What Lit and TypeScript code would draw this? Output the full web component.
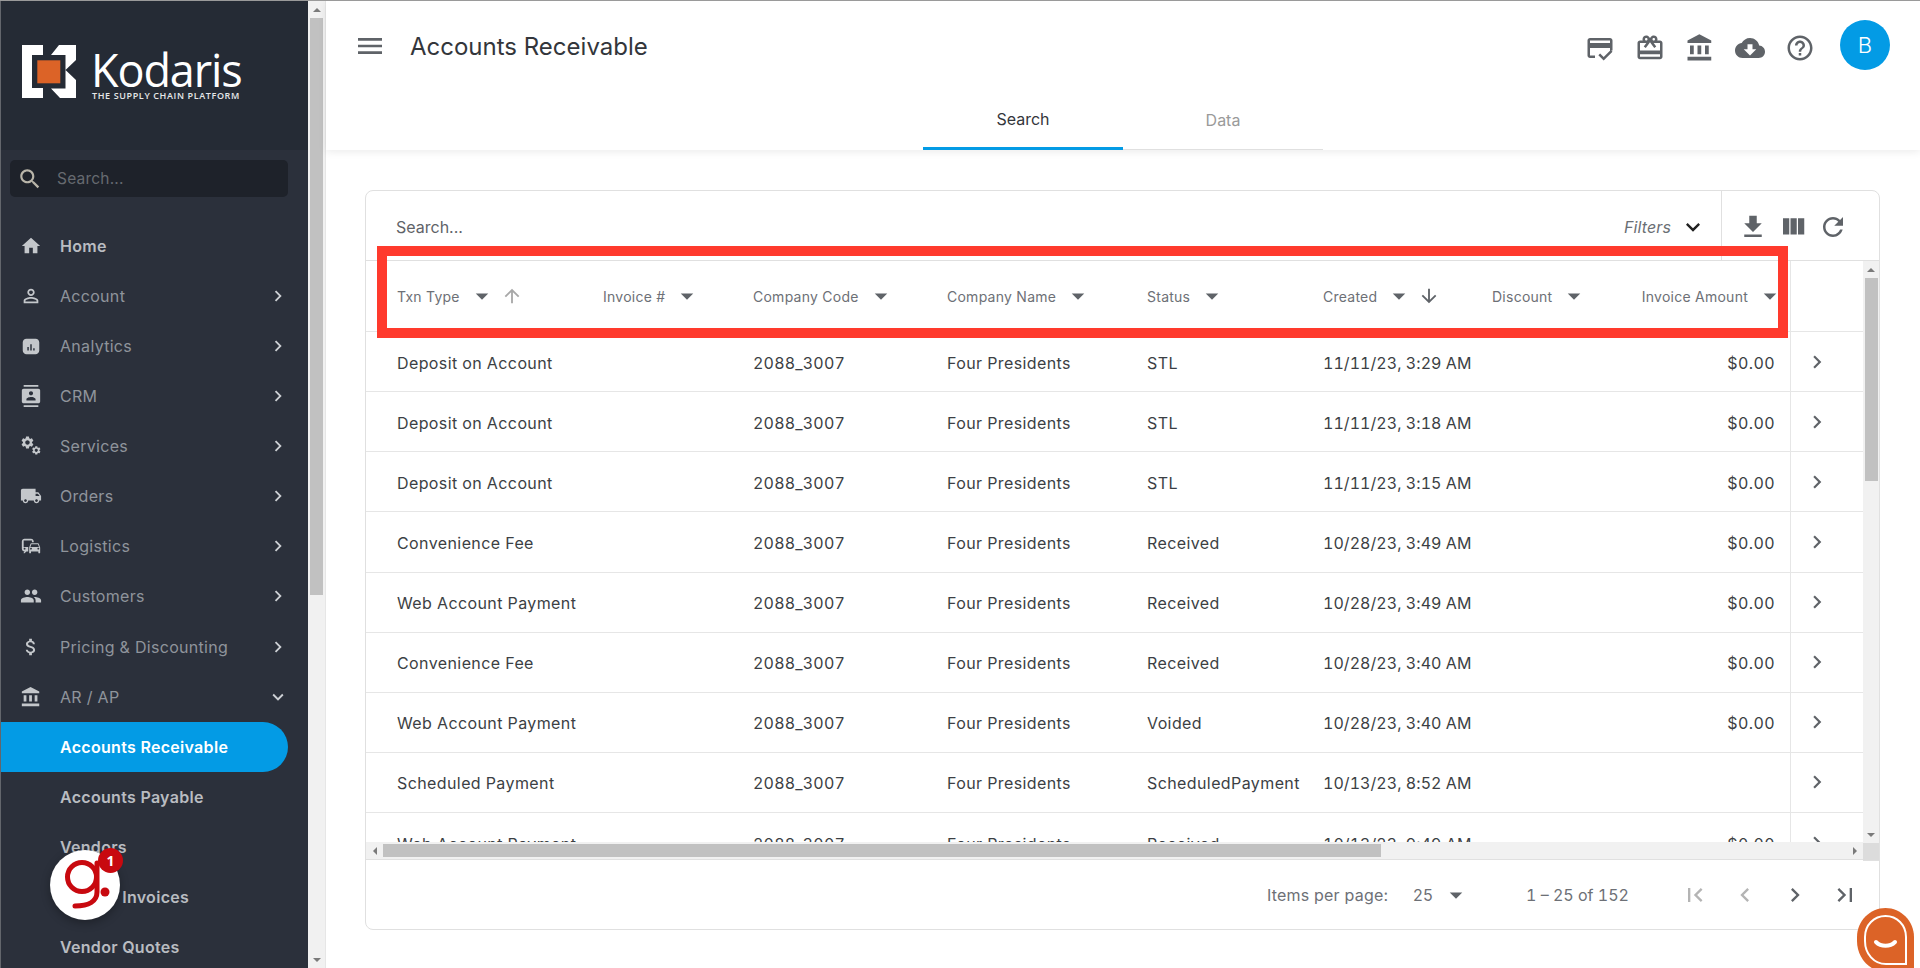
import { LitElement, html, css } from "lit";
import { customElement } from "lit/decorators.js";

const P: Record<string, string> = {
  home: "M10 20v-6h4v6h5v-8h3L12 3 2 12h3v8z",
  person: "M12 5.9c1.16 0 2.1.94 2.1 2.1s-.94 2.1-2.1 2.1S9.9 9.16 9.9 8s.94-2.1 2.1-2.1m0 9c2.97 0 6.1 1.46 6.1 2.1v1.1H5.9V17c0-.64 3.13-2.1 6.1-2.1M12 4C9.79 4 8 5.79 8 8s1.79 4 4 4 4-1.79 4-4-1.79-4-4-4zm0 9c-2.67 0-8 1.34-8 4v3h16v-3c0-2.66-5.33-4-8-4z",
  analytics: "M7 4h10c2.2 0 4 1.8 4 4v9c0 2.2-1.8 4-4 4H7c-2.2 0-4-1.8-4-4V8c0-2.2 1.8-4 4-4zM8 13v4h1.6v-4zM11.2 10v7h1.6v-7zM14.4 14.5V17H16v-2.5z",
  crm: "M20 0H4v2h16V0zM4 24h16v-2H4v2zM20 4H4c-1.1 0-2 .9-2 2v12c0 1.1.9 2 2 2h16c1.1 0 2-.9 2-2V6c0-1.1-.9-2-2-2zm-8 2.75c1.24 0 2.25 1.01 2.25 2.25s-1.01 2.25-2.25 2.25S9.75 10.24 9.75 9 10.76 6.75 12 6.75zM17 17H7v-1.5c0-1.67 3.33-2.5 5-2.5s5 .83 5 2.5V17z",
  truck: "M20 8h-3V4H3c-1.1 0-2 .9-2 2v11h2c0 1.66 1.34 3 3 3s3-1.34 3-3h6c0 1.66 1.34 3 3 3s3-1.34 3-3h2v-5l-3-4zM6 18.5c-.83 0-1.5-.67-1.5-1.5s.67-1.5 1.5-1.5 1.5.67 1.5 1.5-.67 1.5-1.5 1.5zm13.5-9l1.96 2.5H17V9.5h2.5zm-1.5 9c-.83 0-1.5-.67-1.5-1.5s.67-1.5 1.5-1.5 1.5.67 1.5 1.5-.67 1.5-1.5 1.5z",
  commute: "M12 4H5C3.34 4 2 5.34 2 7v8c0 1.66 1.34 3 3 3l-1 1v1h1l2-2h2v-5H4V6h9v2h2V7c0-1.66-1.34-3-3-3zM5 14c.55 0 1 .45 1 1s-.45 1-1 1-1-.45-1-1 .45-1 1-1zm15.57-4.34c-.14-.4-.52-.66-.97-.66h-7.19c-.46 0-.83.26-.98.66L10 13.77l.01 5.51c0 .38.31.72.69.72h.62c.38 0 .68-.38.68-.76V18h8v1.24c0 .38.31.76.69.76h.61c.38 0 .69-.34.69-.72l.01-1.37v-4.14l-1.43-4.07zm-8.16.34h7.19l1.03 3h-9.25l1.03-3zM12 16c-.55 0-1-.45-1-1s.45-1 1-1 1 .45 1 1-.45 1-1 1zm8 0c-.55 0-1-.45-1-1s.45-1 1-1 1 .45 1 1-.45 1-1 1z",
  people: "M16 11c1.66 0 2.99-1.34 2.99-3S17.66 5 16 5c-1.66 0-3 1.34-3 3s1.34 3 3 3zm-8 0c1.66 0 2.99-1.34 2.99-3S9.66 5 8 5C6.34 5 5 6.34 5 8s1.34 3 3 3zm0 2c-2.33 0-7 1.17-7 3.5V19h14v-2.5c0-2.33-4.67-3.5-7-3.5zm8 0c-.29 0-.62.02-.97.05 1.16.84 1.97 1.97 1.97 3.45V19h6v-2.5c0-2.33-4.67-3.5-7-3.5z",
  money: "M11.8 10.9c-2.27-.59-3-1.2-3-2.15 0-1.09 1.01-1.85 2.7-1.85 1.78 0 2.44.85 2.5 2.1h2.21c-.07-1.72-1.12-3.3-3.21-3.81V3h-3v2.16c-1.94.42-3.5 1.68-3.5 3.61 0 2.31 1.91 3.46 4.7 4.13 2.5.6 3 1.48 3 2.41 0 .69-.49 1.79-2.7 1.79-2.06 0-2.87-.92-2.98-2.1h-2.2c.12 2.19 1.76 3.42 3.68 3.83V21h3v-2.15c1.95-.37 3.5-1.5 3.5-3.55 0-2.84-2.43-3.81-4.7-4.4z",
  bank: "M4 10v7h3v-7H4zm6 0v7h3v-7h-3zM2 22h19v-3H2v3zm14-12v7h3v-7h-3zm-4.5-9L2 6v2h19V6l-9.5-5z",
  right: "M10 6L8.59 7.41 13.17 12l-4.58 4.59L10 18l6-6z",
  left: "M15.41 7.41L14 6l-6 6 6 6 1.41-1.41L10.83 12z",
  down: "M16.59 8.59L12 13.17 7.41 8.59 6 10l6 6 6-6z",
  menu: "M3 18h18v-2H3v2zm0-5h18v-2H3v2zm0-7v2h18V6H3z",
  search: "M15.5 14h-.79l-.28-.27C15.41 12.59 16 11.11 16 9.5 16 5.91 13.09 3 9.5 3S3 5.91 3 9.5 5.91 16 9.5 16c1.61 0 3.09-.59 4.23-1.57l.27.28v.79l5 4.99L20.49 19l-4.99-5zm-6 0C7.01 14 5 11.99 5 9.5S7.01 5 9.5 5 14 7.01 14 9.5 11.99 14 9.5 14z",
  help: "M11 18h2v-2h-2v2zm1-16C6.48 2 2 6.48 2 12s4.48 10 10 10 10-4.48 10-10S17.52 2 12 2zm0 18c-4.41 0-8-3.59-8-8s3.59-8 8-8 8 3.59 8 8-3.59 8-8 8zm0-14c-2.21 0-4 1.79-4 4h2c0-1.1.9-2 2-2s2 .9 2 2c0 2-3 1.75-3 5h2c0-2.25 3-2.5 3-5 0-2.21-1.79-4-4-4z",
  cloud: "M19.35 10.04C18.67 6.59 15.64 4 12 4 9.11 4 6.6 5.64 5.35 8.04 2.34 8.36 0 10.91 0 14c0 3.31 2.69 6 6 6h13c2.76 0 5-2.24 5-5 0-2.64-2.05-4.78-4.65-4.96zM17 13l-5 5-5-5h3V9h4v4h3z",
  download: "M19 9h-4V3H9v6H5l7 7 7-7zM5 18v2h14v-2H5z",
  columns: "M10 18h5V5h-5v13zm-6 0h5V5H4v13zM16 5v13h5V5h-5z",
  refresh: "M17.65 6.35C16.2 4.9 14.21 4 12 4c-4.42 0-7.99 3.58-7.99 8s3.57 8 7.99 8c3.73 0 6.84-2.55 7.73-6h-2.08c-.82 2.33-3.04 4-5.65 4-3.31 0-6-2.69-6-6s2.69-6 6-6c1.66 0 3.14.69 4.22 1.78L13 11h7V4l-2.35 2.35z",
  up: "M4 12l1.41 1.41L11 7.83V20h2V7.83l5.58 5.59L20 12l-8-8-8 8z",
  dn: "M20 12l-1.41-1.41L13 16.17V4h-2v12.17l-5.58-5.59L4 12l8 8 8-8z",
  first: "M18.41 16.59L13.82 12l4.59-4.59L17 6l-6 6 6 6zM6 6h2v12H6z",
  last: "M5.59 7.41L10.18 12l-4.59 4.59L7 18l6-6-6-6zM16 6h2v12h-2z",
  caret: "M7 10l5 5 5-5z",
  gift: "M20 6h-2.18c.11-.31.18-.65.18-1 0-1.66-1.34-3-3-3-1.05 0-1.96.54-2.5 1.35l-.5.67-.5-.68C10.96 2.54 10.05 2 9 2 7.34 2 6 3.34 6 5c0 .35.07.69.18 1H4c-1.11 0-1.99.89-1.99 2L2 19c0 1.11.89 2 2 2h16c1.11 0 2-.89 2-2V8c0-1.11-.89-2-2-2zm-5-2c.55 0 1 .45 1 1s-.45 1-1 1-1-.45-1-1 .45-1 1-1zM9 4c.55 0 1 .45 1 1s-.45 1-1 1-1-.45-1-1 .45-1 1-1zm11 15H4v-2h16v2zm0-5H4V8h5.08L7 10.83 8.62 12 11 8.76l1-1.36 1 1.36L15.38 12 17 10.83 14.92 8H20v6z",
  card: "M20 4H4c-1.11 0-2 .89-2 2v12c0 1.11.89 2 2 2h4v-2H4v-6h16v2h2V6c0-1.11-.89-2-2-2zm0 4H4V6h16v2zm-5.07 11.17l-2.83-2.83-1.41 1.41L14.93 22 22 14.93l-1.41-1.41-5.66 5.65z",
  gear: "M19.14 12.94c.04-.3.06-.61.06-.94 0-.32-.02-.64-.07-.94l2.03-1.58c.18-.14.23-.41.12-.61l-1.92-3.32c-.12-.22-.37-.29-.59-.22l-2.39.96c-.5-.38-1.03-.7-1.62-.94l-.36-2.54c-.04-.24-.24-.41-.48-.41h-3.84c-.24 0-.43.17-.47.41l-.36 2.54c-.59.24-1.13.57-1.62.94l-2.39-.96c-.22-.08-.47 0-.59.22L2.74 8.87c-.12.21-.08.47.12.61l2.03 1.58c-.05.3-.09.63-.09.94s.02.64.07.94l-2.03 1.58c-.18.14-.23.41-.12.61l1.92 3.32c.12.22.37.29.59.22l2.39-.96c.5.38 1.03.7 1.62.94l.36 2.54c.05.24.24.41.48.41h3.84c.24 0 .44-.17.47-.41l.36-2.54c.59-.24 1.13-.56 1.62-.94l2.39.96c.22.08.47 0 .59-.22l1.92-3.32c.12-.22.07-.47-.12-.61l-2.01-1.58zM12 15.6c-1.98 0-3.6-1.62-3.6-3.6s1.62-3.6 3.6-3.6 3.6 1.62 3.6 3.6-1.62 3.6-3.6 3.6z",
};

const ic = (n: string, cls = "") => html`<svg class="ic ${cls}" viewBox="0 0 24 24"><path d=${P[n]}></path></svg>`;
const services = html`<svg class="ic s22" viewBox="0 0 24 24">
  <g transform="translate(0 0) scale(.68)"><path d=${P.gear}></path></g>
  <g transform="translate(12 11) scale(.48)"><path d=${P.gear}></path></g>
</svg>`;

const NAV = [
  { t: "Home", i: "home", cls: "strong" },
  { t: "Account", i: "person", ch: "right" },
  { t: "Analytics", i: "analytics", ch: "right" },
  { t: "CRM", i: "crm", ch: "right" },
  { t: "Services", i: "services", ch: "right" },
  { t: "Orders", i: "truck", ch: "right" },
  { t: "Logistics", i: "commute", ch: "right" },
  { t: "Customers", i: "people", ch: "right" },
  { t: "Pricing & Discounting", i: "money", ch: "right" },
  { t: "AR / AP", i: "bank", ch: "down" },
  { t: "Accounts Receivable", cls: "active" },
  { t: "Accounts Payable", cls: "strong" },
  { t: "Vendors", cls: "strong" },
  { t: "Vendor Invoices", cls: "strong" },
  { t: "Vendor Quotes", cls: "strong" },
];

const HEAD = [
  { t: "Txn Type", sort: "up", sc: "faded" },
  { t: "Invoice #" },
  { t: "Company Code" },
  { t: "Company Name" },
  { t: "Status" },
  { t: "Created", sort: "dn", sc: "" },
  { t: "Discount" },
  { t: "Invoice Amount", end: true },
];

const ROWS = [
  ["Deposit on Account", "STL", "11/11/23, 3:29 AM", "$0.00"],
  ["Deposit on Account", "STL", "11/11/23, 3:18 AM", "$0.00"],
  ["Deposit on Account", "STL", "11/11/23, 3:15 AM", "$0.00"],
  ["Convenience Fee", "Received", "10/28/23, 3:49 AM", "$0.00"],
  ["Web Account Payment", "Received", "10/28/23, 3:49 AM", "$0.00"],
  ["Convenience Fee", "Received", "10/28/23, 3:40 AM", "$0.00"],
  ["Web Account Payment", "Voided", "10/28/23, 3:40 AM", "$0.00"],
  ["Scheduled Payment", "ScheduledPayment", "10/13/23, 8:52 AM", ""],
  ["Web Account Payment", "Received", "10/13/23, 9:49 AM", "$0.00"],
];

@customElement("app-root")
export class AppRoot extends LitElement {
  static styles = css`
    :host {
      display: flex;
      position: relative;
      width: 1920px;
      height: 968px;
      overflow: hidden;
      background: #fff;
      box-sizing: border-box;
      border-top: 1px solid #9a9a9a;
      font-family: "Inter", "Noto Sans", sans-serif;
      color: #3c3f44;
    }
    * { box-sizing: border-box; }
    .ic { display: block; width: 24px; height: 24px; fill: currentColor; flex: none; }
    .s22 { width: 22px; height: 22px; }
    .s26 { width: 26px; height: 26px; }
    .s28 { width: 28px; height: 28px; }
    .s32 { width: 32px; height: 32px; }

    .side { width: 308px; flex: none; background: #2b303b; border-left: 1px solid #63666c; display: flex; flex-direction: column; overflow: hidden; }
    .logo { height: 149px; margin-left: -1px; background: #252b35; padding: 44px 0 0 22px; display: flex; gap: 15px; flex: none; }
    .logo svg { width: 54px; height: 54px; flex: none; }
    .word { display: flex; flex-direction: column; color: #fff; }
    .word b { font: 500 45px/42px "Open Sans", sans-serif; letter-spacing: -1.1px; margin-top: 4px; }
    .word i { font: 600 9px/10px "Open Sans", sans-serif; letter-spacing: .62px; white-space: nowrap; margin-top: 0; margin-left: 1px; color: #e6e7e9; }
    .sb { margin: 10px 0 24px 9px; width: 278px; height: 37px; flex: none; background: #1e222a; border-radius: 5px; display: flex; align-items: center; color: #b9b5a9; padding-left: 7px; }
    .sb span { margin-left: 14px; font-size: 15.5px; color: #666a70; letter-spacing: .2px; }
    .nav { display: flex; flex-direction: column; }
    .item { height: 50.07px; flex: none; display: flex; align-items: center; color: #8f949b; font-size: 16px; letter-spacing: .3px; padding-left: 59px; position: relative; white-space: nowrap; }
    .item .lead { position: absolute; left: 19px; top: 50%; transform: translateY(-50%); color: #c4c7cb; }
    .item .ch { position: absolute; left: 266px; top: 50%; transform: translateY(-50%); color: #cdd0d5; }
    .item.strong { color: #b9bcc1; font-weight: 600; }
    .item.active { color: #fff; font-weight: 600; background: #039be5; width: 288px; margin-left: -1px; padding-left: 60px; border-radius: 0 25px 25px 0; }

    .page-sb { width: 18px; flex: none; background: #f1f1f1; border-right: 1px solid #e6e6e6; display: flex; flex-direction: column; align-items: center; }
    .btn { height: 17px; width: 16px; flex: none; display: flex; align-items: center; justify-content: center; color: #7a7a7a; }
    .tu { width: 0; height: 0; border: 4px solid transparent; border-top: 0; border-bottom: 4px solid currentColor; }
    .td { width: 0; height: 0; border: 4px solid transparent; border-bottom: 0; border-top: 4px solid currentColor; }
    .tl { width: 0; height: 0; border: 4px solid transparent; border-left: 0; border-right: 4px solid currentColor; }
    .tr { width: 0; height: 0; border: 4px solid transparent; border-right: 0; border-left: 4px solid currentColor; }
    .thumb { background: #c1c1c1; }
    .page-sb .thumb { width: 13px; height: 577px; flex: none; }
    .page-sb .rest { flex: 1; }

    .main { flex: 1; display: flex; flex-direction: column; min-width: 0; }
    .head { height: 149px; flex: none; box-shadow: 0 2px 8px rgba(0,0,0,.08); display: flex; flex-direction: column; position: relative; }
    .bar { height: 89px; flex: none; display: flex; align-items: center; padding: 0 30px 0 28px; color: #5f6368; }
    .title { font-size: 24px; margin: 2px 0 0 24px; color: #33363b; flex: 1; font-weight: 400; }
    .tools { display: flex; align-items: center; gap: 20px; margin-top: 4px; }
    .tools .ic { width: 30px; height: 30px; }
    .avatar { width: 50px; height: 50px; border-radius: 50%; background: #039be5; color: #fff; display: flex; align-items: center; justify-content: center; font-size: 22px; font-weight: 300; margin: -2px 0 0 25px; }
    .tabs { height: 60px; flex: none; display: flex; justify-content: center; }
    .tab { width: 200px; display: flex; align-items: center; justify-content: center; font-size: 16px; color: #9a9a9a; border-bottom: 1px solid #e0e0e0; }
    .tab.on { color: #33363b; border-bottom: 3px solid #039be5; }

    .content { flex: 1; padding: 40px 40px 38px 39px; display: flex; flex-direction: column; min-height: 0; }
    .card { flex: 1; border: 1px solid #e0e0e0; border-radius: 8px; display: flex; flex-direction: column; min-height: 0; overflow: hidden; }
    .toolbar { height: 70px; flex: none; display: flex; border-bottom: 1px solid #e0e0e0; }
    .tb-left { width: 1356px; display: flex; align-items: center; padding: 2px 14px 0 30px; border-right: 1px solid #e0e0e0; font-size: 16px; }
    .tb-left .q { flex: 1; color: #5f6368; }
    .tb-left .f { color: #6b6f75; font-style: italic; margin-right: 8px; letter-spacing: .1px; }
    .tb-left .ic { color: #222; }
    .tb-right { flex: 1; display: flex; align-items: center; padding: 2px 0 0 16px; gap: 10px; color: #5f6368; }
    .tb-right .ic { width: 30px; height: 30px; }

    .tbl { flex: 1; display: flex; min-height: 0; }
    .tview { flex: 1; min-width: 0; display: flex; flex-direction: column; }
    .r { display: grid; grid-template-columns: 206px 150px 194px 200px 176px 169px 151px 164px 72px; padding-left: 15px; align-items: stretch; border-bottom: 1px solid #e6e6e6; flex: none; }
    .r.th { height: 71px; font-size: 14px; letter-spacing: .25px; color: #6d7076; }
    .rows { height: 510px; overflow: hidden; flex: none; }
    .rows .r { height: 60.13px; font-size: 16px; letter-spacing: .4px; font-variant-numeric: tabular-nums; }
    .rows .c { padding-top: 2px; }
    .rows .c.cd { letter-spacing: .2px; }
    .rows .c.dt { letter-spacing: .05px; }
    .c { padding: 0 16px; display: flex; align-items: center; white-space: nowrap; min-width: 0; }
    .c.end { justify-content: flex-end; }
    .th .c.end { padding-right: 6px; }
    .rows .a, .a { padding: 0 0 0 13px; justify-content: flex-start; border-left: 1px solid #e6e6e6; color: #5f6368; margin-left: -1px; }
    .a .ic { width: 26px; height: 26px; }
    .th .car { margin-left: 7px; width: 30px; height: 30px; color: #5f6368; }
    .th .srt { margin-left: 4px; color: #5f6368; }
    .th .srt .ic { width: 22px; height: 22px; }
    .th .srt.faded { color: #a8a8a8; }
    .hsb { height: 18px; flex: none; background: #f1f1f1; display: flex; align-items: center; color: #6f6f6f; border-bottom: 1px solid #e0e0e0; }
    .hsb .btn { width: 17px; }
    .hsb .thumb { width: 998px; height: 13px; flex: none; }
    .hsb .rest { flex: 1; }
    .vsb { width: 16px; flex: none; background: #f1f1f1; display: flex; flex-direction: column; align-items: center; color: #7a7a7a; }
    .vsb .thumb { width: 13px; height: 203px; flex: none; }
    .vsb .rest { flex: 1; }
    .vsb .corner { height: 18px; width: 16px; flex: none; background: #dcdcdc; border-bottom: 1px solid #e0e0e0; }
    .vsb .btn { height: 17px; }

    .foot { height: 69px; flex: none; display: flex; align-items: center; font-size: 16px; letter-spacing: .2px; color: #6d7076; padding-left: 901px; margin-top: -1px; }
    .foot .ipp { width: 146px; }
    .foot .sz { width: 28px; }
    .foot .car { width: 30px; height: 30px; color: #5f6368; margin-right: 55px; }
    .foot .rng { width: 155px; letter-spacing: 0; font-variant-numeric: tabular-nums; }
    .pgr { display: flex; gap: 22px; color: #5f6368; }
    .pgr .ic { width: 28px; height: 28px; }
    .pgr .dim { color: #b4b4b4; }

    .mark { position: absolute; left: 377px; top: 245px; width: 1411px; height: 92px; border: 10px solid #ff3a2d; pointer-events: none; }
    .g { position: absolute; left: 50px; top: 849px; width: 70px; height: 70px; border-radius: 50%; background: #fff; box-shadow: 0 3px 10px rgba(0,0,0,.3); }
    .g svg { display: block; width: 70px; height: 70px; }
    .badge { position: absolute; left: 48px; top: -2px; width: 25px; height: 25px; border-radius: 50%; background: #c8090f; color: #fff; font: 700 14px/25px "Open Sans", sans-serif; text-align: center; }
    .chat { position: absolute; left: 1857px; top: 907px; width: 57px; height: 64px; }
    .chat svg { display: block; width: 57px; height: 64px; }
  `;

  render() {
    return html`
      <aside class="side">
        <div class="logo">
          <svg viewBox="0 0 54 54">
            <path fill="#fff" d="M0 0H21V10H10V43H21V53H0Z"></path>
            <path fill="#fff" d="M29 10L37 0H54V15L43.5 25L54 35V53H38L29 43.5H43.5V10Z"></path>
            <rect x="15.3" y="15.3" width="23" height="23" fill="#dc6327"></rect>
          </svg>
          <div class="word"><b>Kodaris</b><i>THE SUPPLY CHAIN PLATFORM</i></div>
        </div>
        <div class="sb">${ic("search", "s26")}<span>Search...</span></div>
        <nav class="nav">
          ${NAV.map(
            (n) => html`<div class="item ${n.cls ?? ""}">
              ${n.i ? html`<span class="lead">${n.i === "services" ? services : ic(n.i, "s22")}</span>` : ""}
              ${n.t}
              ${n.ch ? html`<span class="ch">${ic(n.ch, "s22")}</span>` : ""}
            </div>`
          )}
        </nav>
      </aside>
      <div class="page-sb">
        <div class="btn"><i class="tu"></i></div>
        <div class="thumb"></div>
        <div class="rest"></div>
        <div class="btn"><i class="td"></i></div>
      </div>
      <main class="main">
        <header class="head">
          <div class="bar">
            ${ic("menu", "s32")}
            <div class="title">Accounts Receivable</div>
            <div class="tools">
              ${ic("card")}${ic("gift")}${ic("bank")}${ic("cloud")}${ic("help")}
            </div>
            <div class="avatar">B</div>
          </div>
          <div class="tabs">
            <div class="tab on">Search</div>
            <div class="tab">Data</div>
          </div>
        </header>
        <div class="content">
          <section class="card">
            <div class="toolbar">
              <div class="tb-left">
                <span class="q">Search...</span><span class="f">Filters</span>${ic("down", "s28")}
              </div>
              <div class="tb-right">${ic("download")}${ic("columns")}${ic("refresh")}</div>
            </div>
            <div class="tbl">
              <div class="tview">
                <div class="r th">
                  ${HEAD.map(
                    (h) => html`<div class="c ${h.end ? "end" : ""}">
                      ${h.t}${ic("caret", "car")}
                      ${h.sort ? html`<span class="srt ${h.sc}">${ic(h.sort)}</span>` : ""}
                    </div>`
                  )}
                  <div class="c a"></div>
                </div>
                <div class="rows">
                  ${ROWS.map(
                    (r) => html`<div class="r">
                      <div class="c">${r[0]}</div>
                      <div class="c"></div>
                      <div class="c cd">2088_3007</div>
                      <div class="c">Four Presidents</div>
                      <div class="c">${r[1]}</div>
                      <div class="c dt">${r[2]}</div>
                      <div class="c"></div>
                      <div class="c end">${r[3]}</div>
                      <div class="c a">${ic("right")}</div>
                    </div>`
                  )}
                </div>
                <div class="hsb">
                  <div class="btn"><i class="tl"></i></div>
                  <div class="thumb"></div>
                  <div class="rest"></div>
                  <div class="btn"><i class="tr"></i></div>
                </div>
              </div>
              <div class="vsb">
                <div class="btn"><i class="tu"></i></div>
                <div class="thumb"></div>
                <div class="rest"></div>
                <div class="btn"><i class="td"></i></div>
                <div class="corner"></div>
              </div>
            </div>
            <div class="foot">
              <span class="ipp">Items per page:</span><span class="sz">25</span>${ic("caret", "car")}
              <span class="rng">1 – 25 of 152</span>
              <div class="pgr">
                ${ic("first", "dim")}${ic("left", "dim")}${ic("right")}${ic("last")}
              </div>
            </div>
          </section>
        </div>
      </main>
      <div class="mark"></div>
      <div class="g">
        <svg viewBox="0 0 70 70" fill="none" stroke="#c8090f" stroke-width="5" stroke-linecap="round">
          <circle cx="32" cy="27" r="14.5"></circle>
          <path d="M47 13V42C47 51 39 56 25 56"></path>
          <circle cx="55" cy="42" r="4.5" fill="#c8090f" stroke="none"></circle>
        </svg>
        <div class="badge">1</div>
      </div>
      <div class="chat">
        <svg viewBox="0 0 57 64">
          <path fill="#dc6327" d="M28.5 0C44 0 57 13 57 29V64H29C13 64 0 50 0 33V29C0 13 13 0 28.5 0Z"></path>
          <path fill="none" stroke="#fff" stroke-width="2" d="M28.5 8C40 8 49 17 49 29V56H29C17 56 8 46 8 33V29C8 17 17 8 28.5 8Z"></path>
          <path fill="none" stroke="#fff" stroke-width="4" stroke-linecap="round" d="M19 34C24 39 33 39 38 34"></path>
        </svg>
      </div>
    `;
  }
}
